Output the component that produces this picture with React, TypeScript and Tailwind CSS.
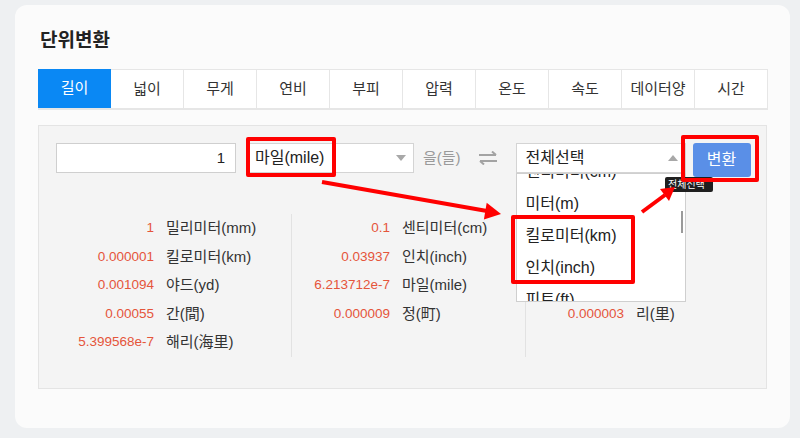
import React from "react";

const FONT = "font-['Liberation_Sans','Noto_Sans_CJK_KR',sans-serif]";

const tabs = ["길이", "넓이", "무게", "연비", "부피", "압력", "온도", "속도", "데이터양", "시간"];

type Row = { value: string; label: string };

const columns: Row[][] = [
  [
    { value: "1", label: "밀리미터(mm)" },
    { value: "0.000001", label: "킬로미터(km)" },
    { value: "0.001094", label: "야드(yd)" },
    { value: "0.00055", label: "간(間)" },
    { value: "5.399568e-7", label: "해리(海里)" },
  ],
  [
    { value: "0.1", label: "센티미터(cm)" },
    { value: "0.03937", label: "인치(inch)" },
    { value: "6.213712e-7", label: "마일(mile)" },
    { value: "0.000009", label: "정(町)" },
  ],
  [
    { value: "0.001", label: "미터(m)" },
    { value: "0.003281", label: "피트(ft)" },
    { value: "0.0033", label: "자(尺)" },
    { value: "0.000003", label: "리(里)" },
  ],
];

const options = ["센티미터(cm)", "미터(m)", "킬로미터(km)", "인치(inch)", "피트(ft)", "야드(yd)"];

function Caret({ up }: { up?: boolean }) {
  return (
    <svg width="10" height="6" viewBox="0 0 10 6" className="shrink-0">
      <path d={up ? "M0 6L5 0L10 6Z" : "M0 0L5 6L10 0Z"} fill="#a8a8a8" />
    </svg>
  );
}

function SwapIcon() {
  return (
    <svg width="20" height="14" viewBox="0 0 20 14" fill="none" stroke="#a3a3a3" strokeWidth="2">
      <path d="M1 4H18M14 0.5L18 4" />
      <path d="M19 10H2M6 13.5L2 10" />
    </svg>
  );
}

export default function App() {
  return (
    <div className={`relative w-[800px] h-[438px] overflow-hidden bg-[#eef0f2] pt-[5px] pl-[15px] ${FONT}`}>
      <div className="w-[775px] h-[423px] rounded-[12px] bg-[#fbfbfb] pt-[27px] pl-[23px]">
        <h1 className="text-[19px] leading-[18px] font-bold text-[#222] pl-[2px]">단위변환</h1>

        {/* tabs */}
        <div className="mt-[19px] flex w-[730px] h-[41px] border-b-2 border-[#e6e6e6]">
          {tabs.map((t, i) => (
            <div
              key={t}
              className={
                i === 0
                  ? "w-[73px] flex items-center justify-center bg-[#0a88f4] text-white text-[15px]"
                  : "w-[73px] flex items-center justify-center border-t border-r border-[#e6e6e6] bg-white text-[#333] text-[15px]"
              }
            >
              {t}
            </div>
          ))}
        </div>

        {/* converter panel */}
        <div className="mt-[15px] w-[729px] h-[264px] border border-[#e4e4e4] bg-[#f4f4f4] pt-[17px] pl-[17px]">
          <div className="flex items-start">
            <div className="w-[180px] h-[30px] border border-[#cfcfcf] bg-white flex items-center justify-end pr-[10px] text-[15px] text-[#222]">
              1
            </div>
            <div className="ml-[10px] w-[168px] h-[30px] border border-[#d4d4d4] bg-white flex items-center justify-between pl-[8px] pr-[7px] text-[16px] text-[#222]">
              <span>마일(mile)</span>
              <Caret />
            </div>
            <div className="ml-[9px] h-[30px] flex items-center text-[15px] text-[#9a9a9a]">을(들)</div>
            <div className="ml-[17px] h-[30px] flex items-center">
              <SwapIcon />
            </div>
            <div className="relative ml-[18px] w-[170px] h-[30px] border border-[#d4d4d4] bg-white flex items-center justify-between pl-[9px] pr-[7px] text-[16px] text-[#222]">
              <span>전체선택</span>
              <Caret up />
              <div className="absolute left-[-1px] top-[29px] w-[170px] h-[129px] overflow-hidden border border-[#cfcfcf] bg-white z-10">
                <div className="-mt-[18px] flex flex-col">
                  {options.map((o) => (
                    <div key={o} className="h-[32px] shrink-0 flex items-center pl-[9px] text-[16px] text-[#222]">
                      {o}
                    </div>
                  ))}
                </div>
                <div className="absolute right-[2px] top-[37px] w-[2px] h-[22px] bg-[#9a9a9a]" />
              </div>
            </div>
            <button className="ml-[7px] w-[58px] h-[34px] rounded-[3px] bg-[#5a8fe7] text-white text-[16px]">변환</button>
          </div>

          {/* results */}
          <div className="mt-[37px] flex">
            {columns.map((col, ci) => (
              <div
                key={ci}
                className={
                  ci === 0
                    ? "w-[235px] h-[143px] flex flex-col"
                    : "w-[234px] h-[143px] flex flex-col border-l border-[#e2e2e2]"
                }
              >
                {col.map((r) => (
                  <div key={r.label} className="h-[28.5px] flex items-center gap-[12px]">
                    <span className="w-[98px] text-right text-[13.5px] text-[#e5553b]">{r.value}</span>
                    <span className="text-[15px] text-[#333]">{r.label}</span>
                  </div>
                ))}
              </div>
            ))}
          </div>
        </div>
      </div>

      {/* tooltip under the button */}
      <div className="absolute left-[665px] top-[177px] w-[48px] h-[15px] rounded-[2px] bg-[#1f1f1f] overflow-hidden z-20 flex items-center pl-[3px] text-[10px] leading-none text-white whitespace-nowrap">
        전체선택
      </div>

      {/* annotation boxes */}
      <div className="absolute left-[246px] top-[137px] w-[90px] h-[40px] border-[4px] border-[#ff0000] rounded-[2px] z-30" />
      <div className="absolute left-[511px] top-[215px] w-[124px] h-[69px] border-[4px] border-[#ff0000] rounded-[2px] z-30" />
      <div className="absolute left-[681px] top-[135px] w-[78px] h-[47px] border-[4px] border-[#ff0000] rounded-[2px] z-30" />

      {/* annotation arrows */}
      <svg className="absolute left-0 top-0 z-30 pointer-events-none" width="800" height="438" viewBox="0 0 800 438">
        <line x1="322" y1="182" x2="487" y2="211" stroke="#ff0000" strokeWidth="4" />
        <polygon points="501,214 483.9,219.5 486.7,202.8" fill="#ff0000" />
        <line x1="642" y1="212" x2="665" y2="195" stroke="#ff0000" strokeWidth="4" />
        <polygon points="675,187 669,201 660,189" fill="#ff0000" />
      </svg>
    </div>
  );
}
